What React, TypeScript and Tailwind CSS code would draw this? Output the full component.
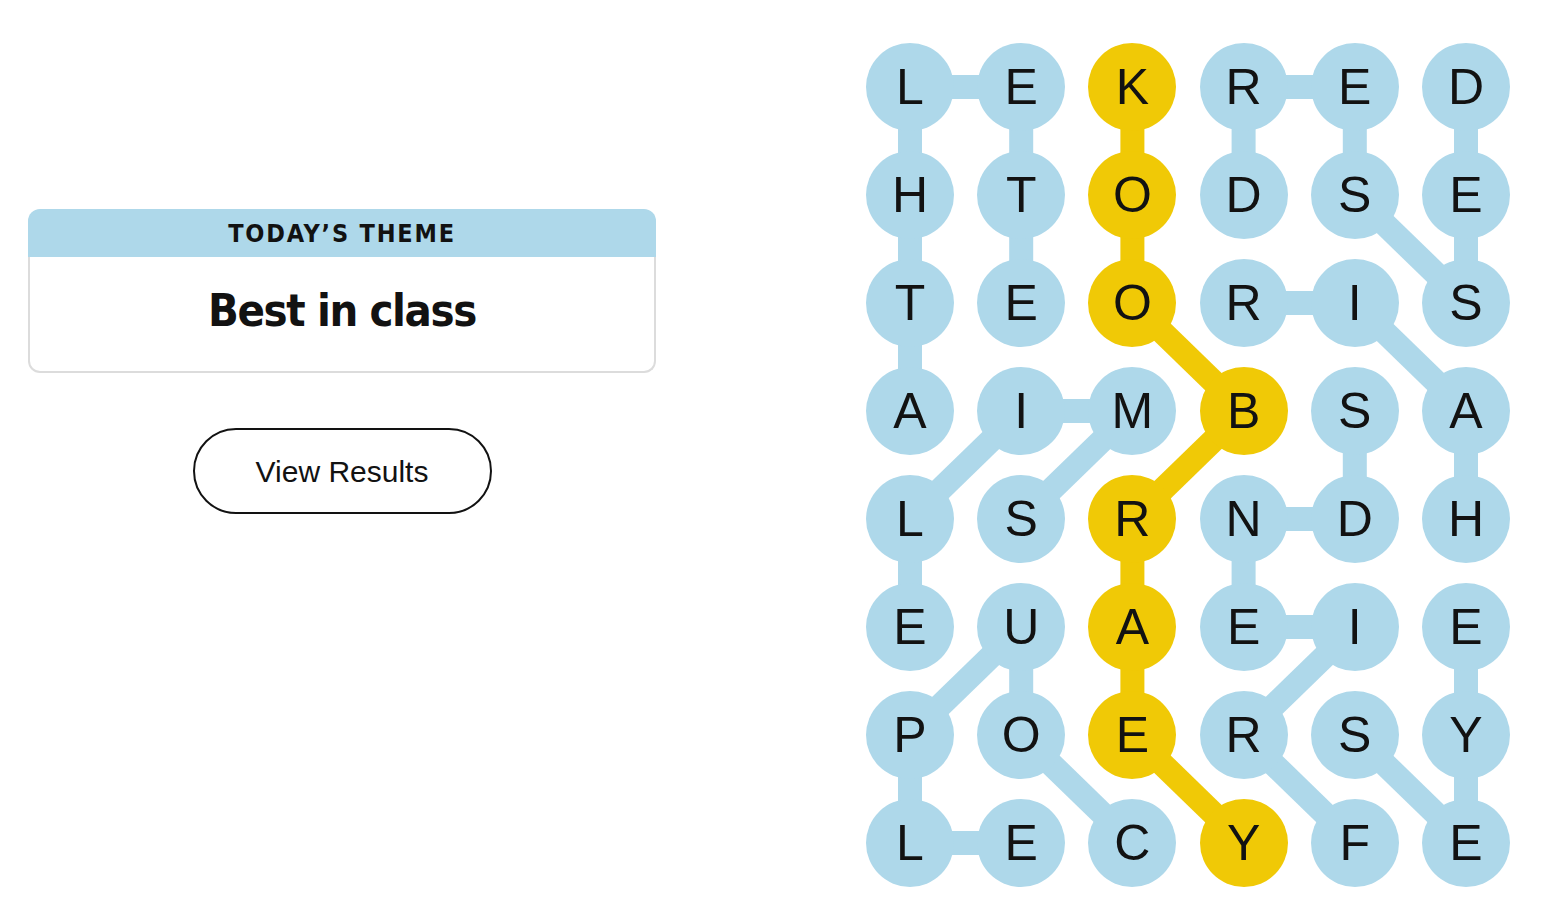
const LETTERS = [
  "LEKRED",
  "HTODSE",
  "TEORIS",
  "AIMBSA",
  "LSRNDH",
  "EUAEIE",
  "POERSY",
  "LECYFE",
];

// row, col pairs of the found words
const YELLOW = new Set(["0,2", "1,2", "2,2", "3,3", "4,2", "5,2", "6,2", "7,3"]);

type Link = [number, number, number, number];

const BLUE_LINKS: Link[] = [
  [0, 0, 0, 1], [0, 0, 1, 0], [1, 0, 2, 0], [2, 0, 3, 0],
  [0, 1, 1, 1], [1, 1, 2, 1],
  [0, 3, 0, 4], [0, 3, 1, 3], [0, 4, 1, 4], [1, 4, 2, 5],
  [0, 5, 1, 5], [1, 5, 2, 5],
  [2, 3, 2, 4], [2, 4, 3, 5], [3, 5, 4, 5],
  [3, 1, 3, 2], [3, 1, 4, 0], [3, 2, 4, 1],
  [3, 4, 4, 4], [4, 3, 4, 4],
  [4, 0, 5, 0], [4, 3, 5, 3], [5, 3, 5, 4],
  [5, 1, 6, 0], [5, 1, 6, 1], [5, 4, 6, 3],
  [5, 5, 6, 5], [6, 0, 7, 0], [7, 0, 7, 1],
  [6, 1, 7, 2], [6, 3, 7, 4], [6, 4, 7, 5], [6, 5, 7, 5],
];

const YELLOW_LINKS: Link[] = [
  [0, 2, 1, 2], [1, 2, 2, 2], [2, 2, 3, 3], [3, 3, 4, 2],
  [4, 2, 5, 2], [5, 2, 6, 2], [6, 2, 7, 3],
];

const cx = (c: number) => 44 + c * 111.2;
const cy = (r: number) => 44 + r * 108;

function Board() {
  return (
    <div className="relative w-[644px] h-[844px]">
      <svg className="absolute inset-0" width="644" height="844">
        {BLUE_LINKS.map(([r1, c1, r2, c2], i) => (
          <line key={"b" + i} x1={cx(c1)} y1={cy(r1)} x2={cx(c2)} y2={cy(r2)} stroke="#aed8ea" strokeWidth={24} />
        ))}
        {YELLOW_LINKS.map(([r1, c1, r2, c2], i) => (
          <line key={"y" + i} x1={cx(c1)} y1={cy(r1)} x2={cx(c2)} y2={cy(r2)} stroke="#f0c906" strokeWidth={24} />
        ))}
      </svg>
      <div className="relative grid grid-cols-[repeat(6,88px)] gap-x-[23.2px] gap-y-[20px]">
        {LETTERS.flatMap((row, r) =>
          row.split("").map((ch, c) => (
            <div
              key={r + "-" + c}
              className={`w-[88px] h-[88px] rounded-full flex items-center justify-center text-[50px] leading-none text-[#121212] ${YELLOW.has(r + "," + c) ? "bg-[#f0c906]" : "bg-[#aed8ea]"}`}
              style={{ fontFamily: '"Liberation Sans", Arial, sans-serif' }}
            >
              {ch}
            </div>
          ))
        )}
      </div>
    </div>
  );
}

export default function App() {
  return (
    <div className="w-[1562px] h-[912px] bg-white flex">
      <div className="w-[684px] pl-[28px] pt-[209px] flex flex-col">
        <div className="w-[628px] h-[164px] flex flex-col">
          <div className="h-[48px] bg-[#aed8ea] rounded-t-[12px] flex items-center justify-center pt-[2px]">
            <span className="text-[25px] font-bold tracking-[1.8px] text-[#121212]" style={{ fontFamily: '"DejaVu Sans Condensed", "DejaVu Sans", sans-serif' }}>
              TODAY’S THEME
            </span>
          </div>
          <div className="flex-1 border-2 border-t-0 border-[#dcdcdc] rounded-b-[12px] flex items-center justify-center pb-[6px]">
            <span className="text-[45px] font-bold tracking-[-1.4px] text-[#121212]" style={{ fontFamily: '"DejaVu Sans Condensed", "DejaVu Sans", sans-serif' }}>
              Best in class
            </span>
          </div>
        </div>
        <div className="w-[628px] flex justify-center mt-[55px]">
          <button className="w-[299px] h-[86px] rounded-full border-2 border-[#121212] text-[30px] text-[#121212] bg-white" style={{ fontFamily: '"Liberation Sans", Arial, sans-serif' }}>
            View Results
          </button>
        </div>
      </div>
      <div className="pl-[182px] pt-[43px]">
        <Board />
      </div>
    </div>
  );
}
